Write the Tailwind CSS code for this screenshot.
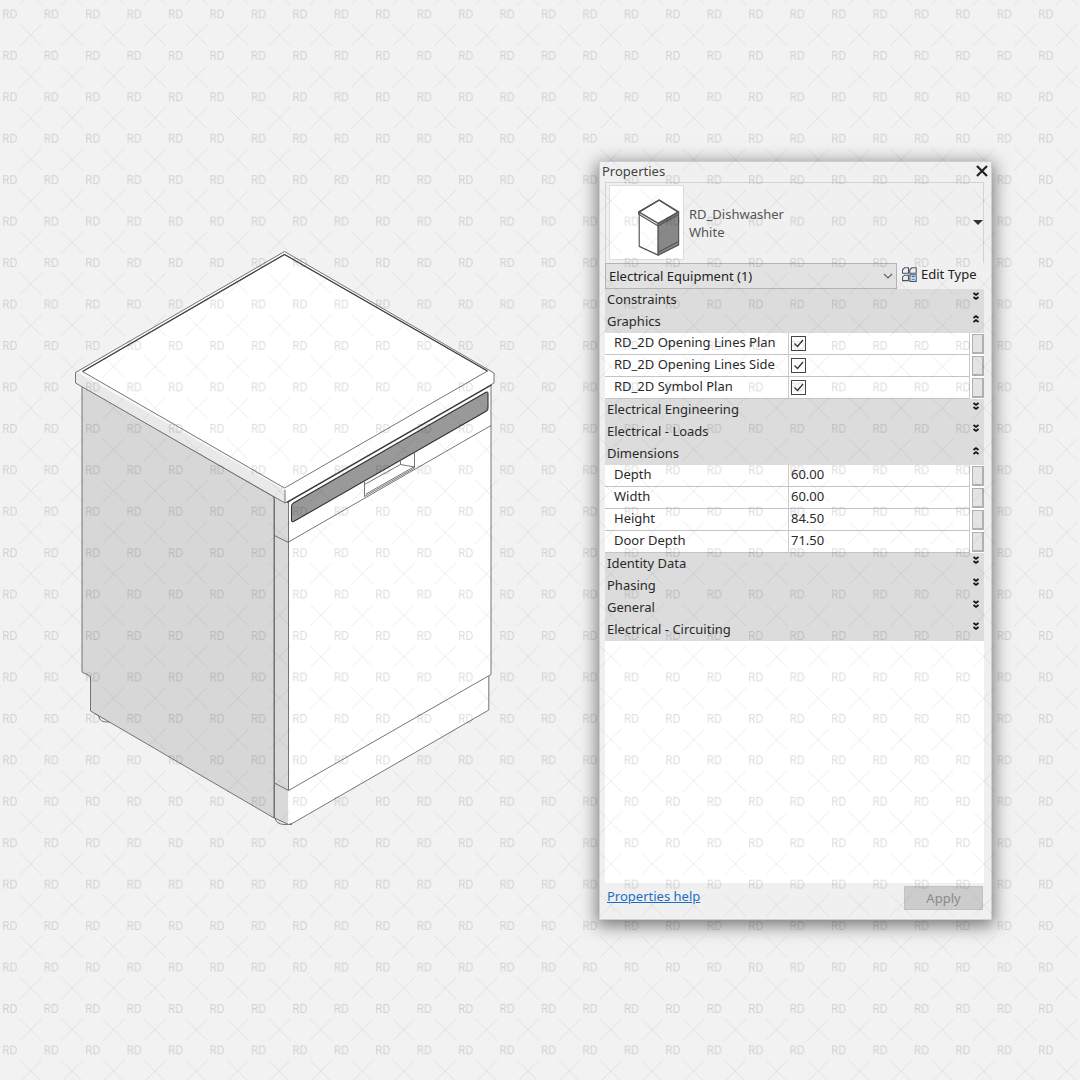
<!DOCTYPE html>
<html lang="en">
<head>
<meta charset="utf-8">
<meta name="viewport" content="width=device-width, initial-scale=1">
<title>RD_Dishwasher properties</title>
<script src="https://cdn.jsdelivr.net/npm/@tailwindcss/browser@4"></script>
</head>
<body class="bg-[#f2f2f2] font-['Noto_Sans','Open_Sans',sans-serif] text-[13px] leading-5 text-[#333]">
<svg class="hidden">
  <symbol id="down" viewBox="0 0 8 9"><path d="M1.500 1L4 3l2.500-2M1.500 5L4 7l2.500-2" fill="none" stroke="#111" stroke-width="1.700"/></symbol>
  <symbol id="up" viewBox="0 0 8 9"><path d="M1.500 4L4 2l2.500 2M1.500 8L4 6l2.500 2" fill="none" stroke="#111" stroke-width="1.700"/></symbol>
</svg>

<main class="relative flex min-h-screen items-center gap-[99px] overflow-hidden pr-[88px] pl-[70px]">

  <!-- Isometric view of the dishwasher -->
  <figure class="min-w-0 flex-1">
    <svg viewBox="70 245 430 590" class="block h-auto w-full" fill="none" stroke="#666" stroke-width="0.900" stroke-linejoin="round">
      <path d="M99 714v3q1 5 8 5h4M275 818q1 6 9 6.500h8" fill="#eee"/>
      <path d="M82 386v286l8.500 4.500V711L274 818V497z" fill="#d7d7d7"/>
      <path d="M274 497v321l14 6.500V500z" fill="#d9d9d9" stroke="none"/>
      <path d="M274.500 497v321l14 6.500M274.500 535.500l14 7M274.500 783l14 7.500"/>
      <path d="M288.500 502L491 384v290.500l-2 1V710L293 823l-4.500 1.500z" fill="#fff" stroke="none"/>
      <path d="M288.500 502v288.500L491 674.500V384M488.800 676v34L293 823l-4.500 1.500M288.500 542L491 425.500"/>
      <path d="M75.500 373v10L285 503V490L82 371z" fill="#e9e9e9" stroke="none"/>
      <path d="M285 489.500V503l209-120v-11L487 370z" fill="#fff" stroke="none"/>
      <path d="M284.500 251.500L75.500 372.500l9 4L284.500 490l209.500-117.500z" fill="#f8f8f8" stroke="none"/>
      <path d="M284.500 488l203-117 6.500 2L285 492z" fill="#fff" stroke="none"/>
      <path d="M284.500 254.500L82.500 371.500l202 116.500 203-117z" fill="#fff"/>
      <path d="M82.500 371.500l202-117 203 116.500" stroke="#444" stroke-width="1.200"/>
      <path d="M285 490v13L75.500 383v-10.500l209-121L494 373v10L285 503"/>
      <path d="M287 502.500L491.500 385" stroke="#333" stroke-width="1.200"/>
      <path d="M293.500 503L486 392.300q2-1 2 1.200v14.500q0 2-1.500 3L294 521.300q-2.500 1-2.500-1.300v-13q0-3 2-4z" fill="#999" stroke="#333" stroke-width="1.100"/>
      <path d="M364.500 480.500v16l50-28.500v-16M364.500 484.500l36-20 14 2.500M400.500 464.500V460M366 494l48.500-27.500"/>
    </svg>
  </figure>

  <!-- Properties palette -->
  <section class="flex w-[393px] shrink-0 flex-col border border-[#d0d0d0] bg-[#f0f0f0] pr-[7px] pl-[5px] shadow-[0_4px_16px_2px_rgba(0,0,0,0.5)]" aria-label="Properties">
    <header class="flex h-5 items-start justify-between">
      <h1 class="-ml-[3px] leading-[18px] text-[#444]">Properties</h1>
      <button type="button" aria-label="Close" class="-mr-1 pt-[3px]">
        <svg class="size-3" viewBox="0 0 12 12"><path d="M1 1l10 10M11 1L1 11" stroke="#222" stroke-width="2.200"/></svg>
      </button>
    </header>

    <button type="button" class="flex h-[81px] items-center border border-b-0 border-[#d0d4d6] pl-[3px] text-left leading-[18px] text-[#555]">
      <svg class="h-[75px] w-[75px] border border-[#ddd] bg-white" viewBox="609 186 75 75" fill="none" stroke="#555" stroke-width="1.200" stroke-linejoin="round">
        <path d="M659.500 200.500L639 213v35l19.500 9V225l20.500-12z" fill="#fff"/>
        <path d="M658.500 225l21-12.500v34L658.500 257z" fill="#888"/>
        <path d="M638.500 212.500l21-12 20 12-21 12z" stroke-width="1.500"/>
        <path d="M638.500 212.500v2.500l20 12 21-12M658.500 254l21-11"/>
      </svg>
      <span class="ml-[5px] flex-1">RD_Dishwasher<br>White</span>
      <svg class="h-[5px] w-[10px]" viewBox="0 0 10 5"><path d="M0 0h10L5 5z" fill="#333"/></svg>
    </button>

    <div class="flex h-[26px] items-start gap-[5px]">
      <div class="relative w-[292px]">
        <select aria-label="Category" class="block h-[26px] w-full appearance-none border border-[#b4b4b4] bg-[#e2e2e2] pl-[3px] text-[#222]"><option>Electrical Equipment (1)</option></select>
        <svg class="pointer-events-none absolute top-[10px] right-1 h-[6px] w-[10px]" viewBox="0 0 10 6"><path d="M1 1l4 4 4-4" fill="none" stroke="#666" stroke-width="1.200"/></svg>
      </div>
      <button type="button" class="flex h-[23px] items-center gap-1 whitespace-nowrap text-[#222]">
        <svg class="size-[15px]" viewBox="0 0 15 15" fill="none" stroke="#4a5566" stroke-width="1.100">
          <path d="M2.500 .8h4v5.400h-6V2.800zM9.800 .8h4.400v5.400H7.800V2.800zM2.500 8.200h4v5.400h-6v-3.400z"/>
          <path d="M8 7.700h6.200v6.700H8z" fill="#fff"/><path d="M9.500 9.500h3.300" stroke="#2471c8" stroke-width="1.600"/><path d="M9.500 12.200h3.300" stroke="#2471c8"/>
        </svg>Edit Type
      </button>
    </div>

    <div class="min-h-[594px] bg-white">
      <table class="w-full table-fixed border-separate border-spacing-0 text-left text-[#2a2a2a] [&_th]:font-normal">
        <colgroup><col class="w-[184px]"><col><col class="w-[14px]"></colgroup>
        <tbody id="rows"></tbody>
      </table>
    </div>

    <footer class="flex h-9 items-start justify-between pt-[3px]">
      <a href="#help" class="ml-[2px] text-[#1a6fc4] underline">Properties help</a>
      <button type="button" disabled class="mr-px h-6 w-[79px] border border-[#c2c2c2] bg-[#cccccc] text-[#8b8b8b]">Apply</button>
    </footer>
  </section>

  <!-- Watermark -->
  <svg class="pointer-events-none absolute inset-0 h-full w-full font-['Inter','Liberation_Sans',sans-serif]" aria-hidden="true">
    <defs>
      <pattern id="mark" width="41.440" height="41.440" patternUnits="userSpaceOnUse" x="-10.700" y="-6.300">
        <path d="M0 0l11 11M41.440 0l-11 11M0 41.440l11-11M41.440 41.440l-11-11" stroke="#000" stroke-opacity=".08" stroke-width=".9"/>
        <text x="20.700" y="25" text-anchor="middle" font-size="11" fill="#000" fill-opacity=".14">RD</text>
      </pattern>
    </defs>
    <rect width="100%" height="100%" fill="url(#mark)"/>
  </svg>
</main>

<script>
  const groups = [
    ["Constraints"],
    ["Graphics", [["RD_2D Opening Lines Plan", true], ["RD_2D Opening Lines Side", true], ["RD_2D Symbol Plan", true]]],
    ["Electrical Engineering"],
    ["Electrical - Loads"],
    ["Dimensions", [["Depth", "60.00"], ["Width", "60.00"], ["Height", "84.50"], ["Door Depth", "71.50"]]],
    ["Identity Data"], ["Phasing"], ["General"], ["Electrical - Circuiting"],
  ];
  let n = 0;
  const field = (id, v) => v === true
    ? `<span class="relative block h-[15px] w-[15px]"><input id="${id}" type="checkbox" checked class="block size-[15px] appearance-none border border-[#444] bg-white"><svg class="pointer-events-none absolute inset-0 size-[15px]" viewBox="0 0 15 15"><path d="M3.500 7.500l3 3 5.500-6.500" fill="none" stroke="#333" stroke-width="1.300"/></svg></span>`
    : `<input id="${id}" type="text" value="${v}" class="block h-[18px] w-full">`;
  document.getElementById("rows").innerHTML = groups.map(([name, items]) => `
    <tr class="bg-[#dcdcdc]">
      <th colspan="3" class="h-[22px] p-0"><button type="button" aria-expanded="${!!items}" class="flex h-[22px] w-full justify-between pr-1 pl-[2px]"><span>${name}</span><svg class="mt-[3px] h-[9px] w-2"><use href="#${items ? "up" : "down"}"/></svg></button></th>
    </tr>` + (items || []).map(([label, v]) => {
      const id = "p" + n++;
      return `<tr>
      <th class="h-[22px] border-r border-b border-r-[#ccc] border-b-[#c4c4c4] p-0 pl-[9px] align-top"><label for="${id}" class="block leading-[18px]">${label}</label></th>
      <td class="border-r border-b border-r-[#ccc] border-b-[#c4c4c4] p-0 pl-[2px] ${v === true ? "align-middle" : "align-top"}">${field(id, v)}</td>
      <td class="p-0 pl-[2px]"><button type="button" aria-label="Associate ${label}" class="block h-[20px] w-3 border border-r-2 border-b-2 border-[#b0b0b0] bg-[#e4e4e4]"></button></td>
    </tr>`;
    }).join("")).join("");
</script>
</body>
</html>
